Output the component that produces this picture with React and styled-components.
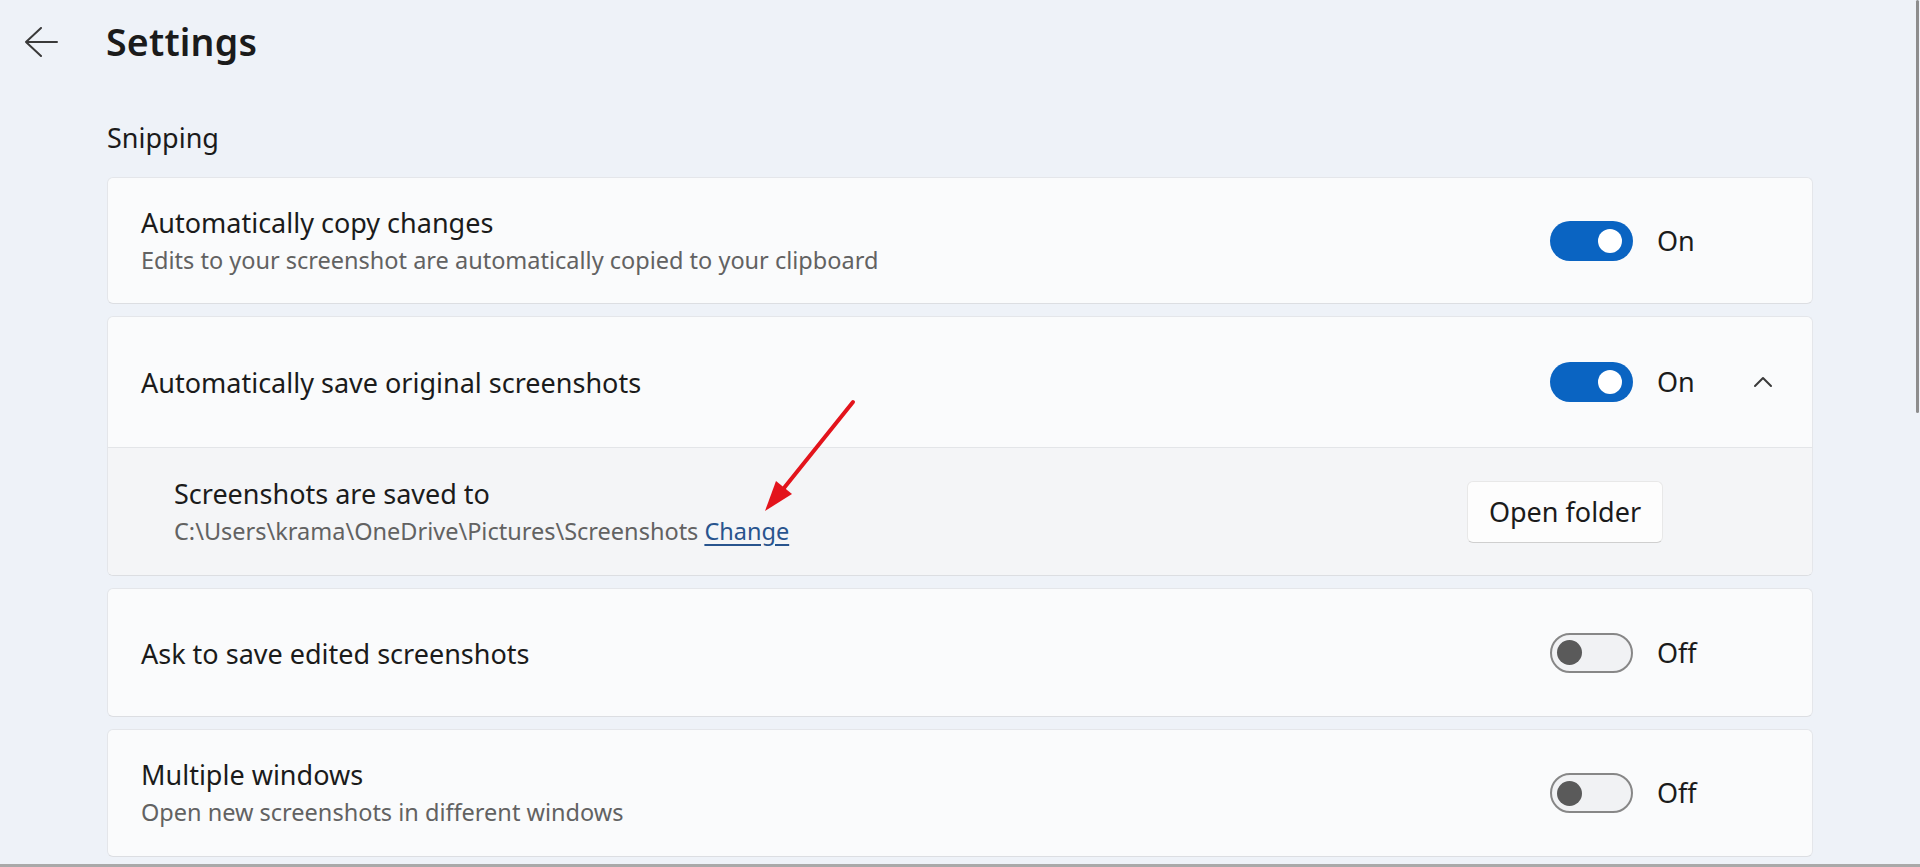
import React from 'react';
import styled, { createGlobalStyle } from 'styled-components';

const GlobalStyle = createGlobalStyle`
  html, body { margin: 0; padding: 0; }
  body {
    background: #eef2f8;
    font-family: "Noto Sans", "Open Sans", "Liberation Sans", sans-serif;
  }
  * { box-sizing: border-box; }
`;

const Window = styled.div`
  position: relative;
  width: 1920px;
  height: 867px;
  overflow: hidden;
  background: #eef2f8;
  border-bottom: 3px solid #a9a9a9;
  color: #1b1b1b;
`;

const Header = styled.header`
  height: 84px;
  display: flex;
  align-items: center;
  gap: 48px;
  padding-left: 24px;
`;

const BackButton = styled.button`
  width: 34px;
  height: 30px;
  padding: 0;
  border: none;
  background: transparent;
  display: flex;
  align-items: center;
  justify-content: center;
  color: #3a3a3a;
`;

const Title = styled.h1`
  margin: 0;
  font-size: 37.5px;
  line-height: 46px;
  font-weight: 600;
  color: #1b1b1b;
  letter-spacing: 0.2px;
`;

const Content = styled.main`
  padding: 0 107px;
  display: flex;
  flex-direction: column;
`;

const SectionLabel = styled.h2`
  margin: 36px 0 21px;
  font-size: 27px;
  line-height: 36px;
  font-weight: 400;
  color: #1b1b1b;
`;

const CardList = styled.div`
  display: flex;
  flex-direction: column;
  gap: 12px;
`;

const Card = styled.section`
  background: #fafbfc;
  border: 1px solid #e4e6ea;
  border-bottom-color: #dcdee2;
  border-radius: 6px;
  overflow: hidden;
`;

const Row = styled.div`
  height: ${(p) => p.$h}px;
  display: flex;
  align-items: center;
  padding: 0 30px 0 33px;
`;

const SubRow = styled.div`
  height: ${(p) => p.$h}px;
  display: flex;
  align-items: center;
  padding: 0 149px 0 66px;
  background: #f4f5f7;
  border-top: 1px solid #e3e5e8;
`;

const TextBlock = styled.div`
  flex: 1;
  display: flex;
  flex-direction: column;
  gap: 1px;
  padding-top: ${(p) => (p.$withDesc ? 1 : 2)}px;
`;

const RowTitle = styled.div`
  font-size: 27px;
  line-height: 36px;
  color: #1b1b1b;
`;

const RowDesc = styled.div`
  font-size: 23.5px;
  line-height: 36px;
  color: #626262;
`;

const Link = styled.a`
  color: #28548e;
  text-decoration: underline;
  text-underline-offset: 4px;
  margin-left: 6px;
`;

const Controls = styled.div`
  display: grid;
  grid-template-columns: 83px 111px 38px;
  align-items: center;
`;

const Track = styled.span`
  position: relative;
  display: block;
  width: 83px;
  height: 40px;
  border-radius: 20px;
  background: ${(p) => (p.$on ? '#0a64c2' : '#f1f2f4')};
  border: ${(p) => (p.$on ? 'none' : '2px solid #878787')};
`;

const Knob = styled.span`
  position: absolute;
  top: 50%;
  width: ${(p) => (p.$on ? 24 : 25)}px;
  height: ${(p) => (p.$on ? 24 : 25)}px;
  margin-top: ${(p) => (p.$on ? -12 : -12.5)}px;
  border-radius: 50%;
  background: ${(p) => (p.$on ? '#ffffff' : '#5a5a5a')};
  ${(p) => (p.$on ? 'right: 11px;' : 'left: 5px;')}
`;

const StateLabel = styled.span`
  font-size: 27px;
  line-height: 36px;
  color: #1b1b1b;
  padding-left: 24px;
`;

const ChevronSlot = styled.span`
  display: flex;
  align-items: center;
  justify-content: center;
  color: #3a3a3a;
`;

const Button = styled.button`
  width: 196px;
  height: 62px;
  border-radius: 6px;
  background: #fdfdfd;
  border: 1px solid #e8e8e8;
  border-bottom-color: #cfcfcf;
  font-family: inherit;
  font-size: 27px;
  color: #1b1b1b;
  padding: 0;
`;

const ScrollThumb = styled.div`
  position: absolute;
  top: 0;
  right: 1px;
  width: 3px;
  height: 413px;
  border-radius: 2px;
  background: #8d8d8d;
`;

const Annotation = styled.svg`
  position: absolute;
  left: 755px;
  top: 395px;
  pointer-events: none;
`;

function Toggle({ on }) {
  return (
    <Track $on={on}>
      <Knob $on={on} />
    </Track>
  );
}

function ToggleControls({ on, chevron }) {
  return (
    <Controls>
      <Toggle on={on} />
      <StateLabel>{on ? 'On' : 'Off'}</StateLabel>
      <ChevronSlot>
        {chevron && (
          <svg width="20" height="12" viewBox="0 0 20 12">
            <path d="M2 10 L10 2 L18 10" fill="none" stroke="currentColor" strokeWidth="2" strokeLinecap="round" strokeLinejoin="round" />
          </svg>
        )}
      </ChevronSlot>
    </Controls>
  );
}

export default function App() {
  return (
    <>
      <GlobalStyle />
      <Window>
        <Header>
          <BackButton aria-label="Back">
            <svg width="34" height="30" viewBox="0 0 34 30">
              <path d="M33 15 H2 M17 1 L2 15 L17 29" fill="none" stroke="currentColor" strokeWidth="2" strokeLinecap="round" strokeLinejoin="round" />
            </svg>
          </BackButton>
          <Title>Settings</Title>
        </Header>
        <Content>
          <SectionLabel>Snipping</SectionLabel>
          <CardList>
            <Card>
              <Row $h={125}>
                <TextBlock $withDesc>
                  <RowTitle>Automatically copy changes</RowTitle>
                  <RowDesc>Edits to your screenshot are automatically copied to your clipboard</RowDesc>
                </TextBlock>
                <ToggleControls on />
              </Row>
            </Card>
            <Card>
              <Row $h={130}>
                <TextBlock>
                  <RowTitle>Automatically save original screenshots</RowTitle>
                </TextBlock>
                <ToggleControls on chevron />
              </Row>
              <SubRow $h={128}>
                <TextBlock $withDesc>
                  <RowTitle>Screenshots are saved to</RowTitle>
                  <RowDesc>
                    C:\Users\krama\OneDrive\Pictures\Screenshots
                    <Link href="#">Change</Link>
                  </RowDesc>
                </TextBlock>
                <Button>Open folder</Button>
              </SubRow>
            </Card>
            <Card>
              <Row $h={127}>
                <TextBlock>
                  <RowTitle>Ask to save edited screenshots</RowTitle>
                </TextBlock>
                <ToggleControls on={false} />
              </Row>
            </Card>
            <Card>
              <Row $h={126}>
                <TextBlock $withDesc>
                  <RowTitle>Multiple windows</RowTitle>
                  <RowDesc>Open new screenshots in different windows</RowDesc>
                </TextBlock>
                <ToggleControls on={false} />
              </Row>
            </Card>
          </CardList>
        </Content>
        <ScrollThumb />
        <Annotation width="110" height="125" viewBox="755 395 110 125">
          <line x1="853" y1="402" x2="784" y2="488" stroke="#e3141c" strokeWidth="4" strokeLinecap="round" />
          <polygon points="765,511 776,481 792,494" fill="#e3141c" />
        </Annotation>
      </Window>
    </>
  );
}
